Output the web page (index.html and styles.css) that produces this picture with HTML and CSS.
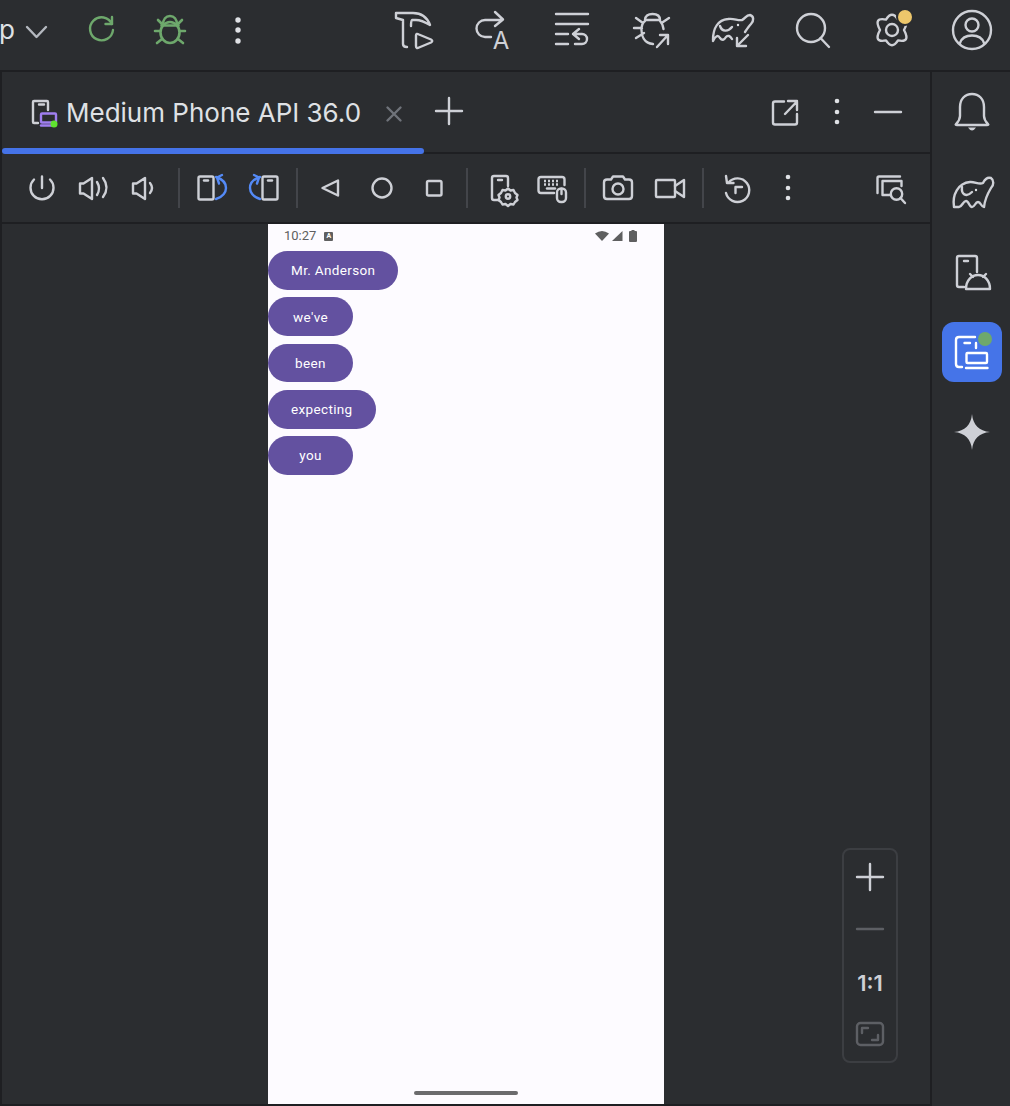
FILE: index.html
```html
<!DOCTYPE html>
<html lang="en">
<head>
<meta charset="utf-8">
<title>Running Devices</title>
<link rel="stylesheet" href="styles.css">
</head>
<body>
<header class="topbar">
  <div class="top-left">
    <span class="crumb">p</span>
    <svg class="ico chev" viewBox="0 0 48 48"><path d="M15 21l9.500 10L34 21"/></svg>
    <svg class="ico green" viewBox="0 0 48 48"><path d="M34 18A11.500 11.500 0 1 0 35 24"/><path d="M34 11v7h-6.500"/></svg>
    <svg class="ico green thick" viewBox="0 0 48 48"><path d="M17 19c0-6 3-9 7-9s7 3 7 9"/><ellipse cx="24" cy="26.500" rx="9.500" ry="10.500"/><path d="M9 25h5M34 25h5M12 14l5 5M36 14l-5 5M11 37l5-4M37 37l-5-4M15.500 19.500h17"/></svg>
    <svg class="ico" viewBox="0 0 48 48"><circle class="dot" cx="24" cy="14" r="2.700"/><circle class="dot" cx="24" cy="24" r="2.700"/><circle class="dot" cx="24" cy="35" r="2.700"/></svg>
  </div>
  <div class="top-right">
    <svg class="ico" viewBox="0 0 48 48"><path d="M8 7h17c8 0 14 4 17 12-5-3-9-5-14-5h-4c-1 1-1 3-1 6M8 7v5l7 2M15 14v24q0 3 4 3"/><path d="M28 29.500q0-2.500 3-1l12 5q2.500 1.500 0 3l-12 5q-3 1.500-3-1.500z"/></svg>
    <svg class="ico" viewBox="0 0 48 48"><path d="M34 14H17a8.500 8.500 0 0 0 0 17h6M27 6l8 7.500L27 20"/><text class="glyph" x="33" y="42.500">A</text></svg>
    <svg class="ico" viewBox="0 0 48 48"><path d="M8 8h32M8 18h32M8 28h12M8 38h12M25 28h9a5 5 0 0 1 0 10h-7M25 28l6-5M25 28l6 5"/></svg>
    <svg class="ico" viewBox="0 0 48 48"><path d="M17 14c0-4 3-6 7.500-6s7.500 2 7.500 6M17 14h15M17 15c-3 2-3.500 6-3.500 9 0 5 2 13 11.500 14M32 15c2 2 3 5 3.500 8M8 12l7 5M6 22h8M8 32l8-5M41 12l-6 4M29 41l11-12M32 29h8v9"/></svg>
    <svg class="ico" viewBox="0 0 48 48"><path d="M5 34C5 22 10 14 20 13c6-1 10 2 14 1 3-1 4-5 8-5 4 1 4 6 1 9-2 2-4 5-6 8M5 35q4-8 7-3 3 4 6-1 3-3 6 2M12 20c2 6 8 6 12 1"/><circle class="dot" cx="30" cy="19" r="1.200"/><path d="M40 29L30 39M29 32v8h9"/></svg>
    <svg class="ico" viewBox="0 0 48 48"><circle cx="23" cy="22" r="14"/><path d="M32.500 32L41 41"/></svg>
    <svg class="ico" viewBox="0 0 48 48"><path d="M18 13.600q6-9.600 12 0 13-2.600 6 10.400 7 13-6 10.400-6 9.600-12 0-13 2.600-6-10.400-7-13 6-10.400z"/><circle cx="24" cy="24" r="6"/><circle class="cut" cx="37" cy="11" r="9"/><circle class="amber" cx="37" cy="11" r="7"/></svg>
    <svg class="ico" viewBox="0 0 48 48"><circle cx="24" cy="24" r="19"/><circle cx="24" cy="19" r="6.500"/><path d="M12 37c2-6 7-7.500 12-7.500s10 1.500 12 7.500"/></svg>
  </div>
</header>

<div class="workspace">
  <main class="panel">
    <div class="tabrow">
      <svg class="ico" viewBox="0 0 48 48"><path d="M28 22v-8q0-1-1-1H14q-1 0-1 1v20q0 1 1 1h4M19 16.500h5"/><rect class="violet" x="21" y="25.500" width="15" height="9" rx="1"/><path class="violet" d="M21 37.500h13"/><circle class="live" cx="34" cy="36" r="3.500"/></svg>
      <span class="tab-title">Medium Phone API 36.0</span>
      <svg class="ico muted close" viewBox="0 0 48 48"><path d="M17.500 19.500l13 13M30.500 19.500l-13 13"/></svg>
      <svg class="ico plus" viewBox="0 0 48 48"><path d="M24 10v26M11 23h26"/></svg>
      <div class="tab-actions">
        <svg class="ico" viewBox="0 0 48 48"><path d="M22 13.500h-9q-2 0-2 2v19q0 2 2 2h20q2 0 2-2V26M23 26l12-12.500M26 13h9v9"/></svg>
        <svg class="ico" viewBox="0 0 48 48"><circle class="dot" cx="24" cy="13" r="2.300"/><circle class="dot" cx="24" cy="24" r="2.300"/><circle class="dot" cx="24" cy="34" r="2.300"/></svg>
        <svg class="ico" viewBox="0 0 48 48"><path d="M11 24h26"/></svg>
      </div>
    </div>
    <div class="tabline"><span class="tabline-active"></span><span class="tabline-rest"></span></div>

    <div class="emubar">
      <div class="group gap-3">
        <svg class="ico" viewBox="0 0 48 48"><path d="M16 15.500a11.500 11.500 0 1 0 16 0M24 12.500V24"/></svg>
        <svg class="ico" viewBox="0 0 48 48"><path d="M11 19.500h3.500L23 14v21l-8.500-5.500H11zM28 18q4 6.500 0 13M34 14q7 9.500 0 19"/></svg>
        <svg class="ico" viewBox="0 0 48 48"><path d="M13 19.500h3.500L25 14v21l-8.500-5.500H13zM30 19q4 5 0 10"/></svg>
      </div>
      <span class="sep sep-wide-left"></span>
      <div class="group">
        <svg class="ico" viewBox="0 0 48 48"><rect x="10.500" y="12.500" width="15" height="23" rx="1.500"/><path d="M16 16.500h4"/><path class="blue" d="M28 35c7-2 10-7 10-11 0-5-4-9-10-11M34 11l-5 2.500 2 6"/></svg>
        <svg class="ico" viewBox="0 0 48 48"><rect x="22.500" y="12.500" width="15" height="23" rx="1.500"/><path d="M28 16.500h4"/><path class="blue" d="M20 35c-7-2-10-7-10-11 0-5 4-9 10-11M14 11l5 2.500-2 6"/></svg>
      </div>
      <span class="sep"></span>
      <div class="group">
        <svg class="ico" viewBox="0 0 48 48"><path d="M16.500 24L32 16.500v15z"/></svg>
        <svg class="ico" viewBox="0 0 48 48"><circle cx="24" cy="24" r="9.500"/></svg>
        <svg class="ico" viewBox="0 0 48 48"><rect x="17" y="17" width="14.500" height="14.500" rx="1.500"/></svg>
      </div>
      <span class="sep sep-wide-right"></span>
      <div class="group gap-2">
        <svg class="ico" viewBox="0 0 48 48"><path d="M30 22v-8q0-2-2-2H16q-2 0-2 2v20q0 2 2 2h5M20 16h4"/><path d="M30 24.500l2.500 2 3-.5 1.500 3 2.500 2-1 2.500 1 2.500-2.500 2-1.500 2.500-3-.5-2.500 2-2.500-2-3 .5-1.500-2.500-2.500-2 1-2.500-1-2.500 2.500-2 1.500-3 3 .5z"/><circle cx="30" cy="32.500" r="2.200"/></svg>
        <svg class="ico" viewBox="0 0 48 48"><path d="M26 29H13q-2.500 0-2.500-2.500v-11q0-2.500 2.500-2.500h21q2.500 0 2.500 2.500V21"/><path class="dash" d="M16 17h15M16 20.500h15"/><path d="M19 24.500h8"/><rect x="29" y="24.500" width="9" height="13.500" rx="4"/><path d="M33.500 25v5"/></svg>
      </div>
      <span class="sep"></span>
      <div class="group">
        <svg class="ico" viewBox="0 0 48 48"><path d="M10 18.500q0-3 3-3h4l2-3h10l2 3h4q3 0 3 3v13.500q0 3-3 3H13q-3 0-3-3z"/><circle cx="24" cy="25" r="5.500"/></svg>
        <svg class="ico" viewBox="0 0 48 48"><rect x="10" y="16" width="19" height="17" rx="1"/><path d="M29 22l9-6v17l-9-6"/></svg>
      </div>
      <span class="sep"></span>
      <div class="group">
        <svg class="ico" viewBox="0 0 48 48"><path d="M16.500 18.500A11.800 11.800 0 1 1 14 29M14 12l1 7h6.500M23.500 29v-6H30"/></svg>
        <svg class="ico" viewBox="0 0 48 48"><circle class="dot" cx="24" cy="13" r="2.300"/><circle class="dot" cx="24" cy="24" r="2.300"/><circle class="dot" cx="24" cy="34" r="2.300"/></svg>
      </div>
      <svg class="ico shots" viewBox="0 0 48 48"><path d="M34 12.500H13q-1.500 0-1.500 1.500v15M35.500 22v-5h-19v14h8"/><circle cx="30.500" cy="30" r="5.700"/><path d="M34.500 34l4.500 5"/></svg>
    </div>

    <section class="stage">
      <div class="phone">
        <div class="statusbar">
          <span class="clock">10:27</span>
          <span class="badge">A</span>
          <span class="status-right">
            <svg class="st" width="14" height="12" viewBox="0 0 14 12"><path d="M0 3.500Q7-1.500 14 3.500L7 11z"/></svg>
            <svg class="st" width="12" height="12" viewBox="0 0 12 12"><path d="M11.500 1v10H1z"/></svg>
            <svg class="st batt" width="8" height="12" viewBox="0 0 8 12"><path d="M2.500 0h3v1H7q1 0 1 1v9q0 1-1 1H1q-1 0-1-1V2q0-1 1-1h1.500z"/></svg>
          </span>
        </div>
        <button class="chip">Mr. Anderson</button>
        <button class="chip">we've</button>
        <button class="chip">been</button>
        <button class="chip">expecting</button>
        <button class="chip">you</button>
        <span class="homebar"></span>
      </div>
      <div class="zoomer">
        <svg class="ico" viewBox="0 0 48 48"><path d="M24 11v26M11 24h26"/></svg>
        <svg class="ico faint" viewBox="0 0 48 48"><path d="M11 24h26"/></svg>
        <span class="ratio">1:1</span>
        <svg class="ico faint" viewBox="0 0 48 48"><rect x="11" y="14" width="26" height="22" rx="3.500"/><path d="M16 24v-5h6M32 26v5h-6"/></svg>
      </div>
    </section>
  </main>

  <aside class="rail">
    <span class="rail-slot"><svg class="ico" viewBox="0 0 48 48"><path d="M8 36q4-4 4-8v-9c0-8 5-13 12-13s12 5 12 13v9q0 4 4 8 1 1-1 1H9q-2 0-1-1z"/><path class="solid" d="M20 39.500h8q-2 3-4 3t-4-3z"/></svg></span>
    <span class="rail-slot"><svg class="ico" viewBox="0 0 48 48"><path d="M6 39C4 27 10 15 22 14c5-.5 9 3 13 1 2-4 5-6 8-5 3 2 3 7 0 10-3 5-6 10-7 19-3 0-3-5-6-5s-3 5-6 5-3-6-6-6-4 6-7 6-5 0-5 0z"/><path d="M14 19c-1 7 4 11 10 5"/><circle class="dot" cx="28" cy="22" r="1.200"/></svg></span>
    <span class="rail-slot"><svg class="ico" viewBox="0 0 48 48"><path d="M29 24V10q0-2-2-2H11q-2 0-2 2v27q0 2 2 2h5M16 13h4"/><path d="M18 41c0-9 6-14 12-14s12 5 12 14zM22 26l3 3M38 26l-3 3"/></svg></span>
    <span class="rail-slot rail-active"><svg class="ico white" viewBox="0 0 48 48"><path d="M27 9H11q-3 0-3 3v24q0 3 3 3h3M16.500 15H22M28 15v5"/><rect x="18.500" y="25" width="20.500" height="10" rx="1"/><path d="M18 40h21.500"/><circle class="online" cx="37" cy="11" r="7"/></svg></span>
    <span class="rail-slot"><svg class="ico" viewBox="0 0 48 48"><path class="solid" d="M24 6c1 11 7 17 18 18-11 1-17 7-18 18-1-11-7-17-18-18 11-1 17-7 18-18z"/></svg></span>
  </aside>
</div>
</body>
</html>
```

FILE: styles.css
```css
* { box-sizing: border-box; }

html, body {
  margin: 0;
  height: 1106px;
  overflow: hidden;
}

body {
  background: #2b2d30;
  color: #dfe1e5;
  font-family: Inter, "Liberation Sans", sans-serif;
  display: flex;
  flex-direction: column;
}

.ico {
  width: 48px;
  height: 48px;
  flex: none;
  fill: none;
  stroke: #ced0d6;
  stroke-width: 2.400;
  stroke-linecap: round;
  stroke-linejoin: round;
  display: block;
}
.ico .dot { fill: #dfe1e5; stroke: none; }
.ico .solid { fill: #ced0d6; stroke: none; }
.ico .glyph {
  fill: #ced0d6;
  stroke: none;
  font-family: Inter, sans-serif;
  font-size: 24px;
  text-anchor: middle;
}

.topbar {
  height: 72px;
  flex: none;
  display: flex;
  align-items: center;
  padding-bottom: 10px;
  border-bottom: 2px solid #1e1f22;
}
.top-left { display: flex; align-items: center; gap: 20px; }
.top-right {
  display: flex;
  align-items: center;
  gap: 32px;
  margin-left: auto;
  padding-right: 14px;
}
.crumb {
  width: 12px;
  margin-right: -20px;
  margin-left: -1px;
  font-size: 26px;
  line-height: 48px;
}
.chev { stroke: #b4b8bf; margin-left: 1px; margin-right: -2px; }
.green { stroke: #6ea86c; }
.thick { stroke-width: 2.600; }
.cut { fill: #2b2d30; stroke: none; }
.amber { fill: #edc76b; stroke: none; }

.workspace { flex: 1; display: flex; min-height: 0; }

.panel {
  width: 932px;
  flex: none;
  display: flex;
  flex-direction: column;
  border-left: 2px solid #1e1f22;
  border-right: 2px solid #1e1f22;
  border-bottom: 2px solid #1e1f22;
}

.tabrow {
  height: 76px;
  flex: none;
  display: flex;
  align-items: center;
  padding: 4px 18px 0 18px;
}
.tab-title {
  font-size: 26px;
  line-height: 32px;
  margin-left: -2px;
  padding-top: 2px;
  color: #dfe1e5;
  white-space: nowrap;
}
.violet { stroke: #a07ff0; }
.live { fill: #5fe32f; stroke: none; }
.muted { stroke: #6f737a; }
.close { margin-left: 9px; }
.plus { margin-left: 7px; }
.tab-actions { display: flex; gap: 3px; margin-left: auto; }

.tabline { height: 6px; flex: none; display: flex; }
.tabline-active {
  width: 422px;
  height: 6px;
  border-radius: 3px;
  background: #4573e8;
}
.tabline-rest { flex: 1; border-bottom: 2px solid #1e1f22; }

.emubar {
  height: 70px;
  flex: none;
  display: flex;
  align-items: center;
  padding: 0 16px;
  border-bottom: 2px solid #1e1f22;
}
.group { display: flex; gap: 4px; }
.gap-2 { gap: 2px; }
.gap-3 { gap: 3px; }
.sep { width: 2px; height: 40px; margin: 0 8px; background: #43454a; flex: none; }
.sep-wide-left { margin-left: 10px; }
.sep-wide-right { margin-right: 10px; }
.blue { stroke: #548af7; }
.dash { stroke-dasharray: 2 2; stroke-linecap: butt; }
.shots { margin-left: auto; }

.stage {
  position: relative;
  flex: 1;
  display: flex;
  justify-content: center;
  min-height: 0;
}

.phone {
  width: 396px;
  background: #fdfbff;
  display: flex;
  flex-direction: column;
  align-items: flex-start;
}
.statusbar {
  width: 100%;
  height: 27px;
  flex: none;
  display: flex;
  align-items: center;
  padding: 0 27px 3px 16px;
  font-family: Roboto, sans-serif;
  color: #5f5f60;
}
.clock { font-size: 13px; line-height: 16px; }
.badge {
  width: 9px;
  height: 9px;
  margin-left: 8px;
  background: #5f5f60;
  color: #fff;
  border-radius: 1px;
  font-size: 7px;
  font-weight: 700;
  line-height: 9px;
  text-align: center;
}
.status-right { display: flex; align-items: center; gap: 2px; margin-left: auto; }
.st { fill: #5f5f60; display: block; }
.batt { margin-left: 4px; }

.chip {
  height: 38.750px;
  min-width: 85px;
  flex: none;
  margin: 0 0 7.500px;
  padding: 0 23px;
  border: 0;
  border-radius: 19.400px;
  background: #6351a0;
  color: #fff;
  font-family: Roboto, sans-serif;
  font-size: 13.500px;
  font-weight: 400;
  letter-spacing: 0.350px;
}

.homebar {
  width: 104px;
  height: 4px;
  margin: auto 0 9px 146px;
  border-radius: 2px;
  background: #6b6b6d;
  flex: none;
}

.zoomer {
  position: absolute;
  right: 32px;
  bottom: 41px;
  width: 56px;
  height: 215px;
  border: 2px solid #3c3e42;
  border-radius: 8px;
  display: flex;
  flex-direction: column;
  align-items: center;
  gap: 4px;
  padding-top: 3px;
}
.faint { stroke: #5d5f64; }
.ratio {
  height: 48px;
  font-size: 22px;
  font-weight: 600;
  line-height: 52px;
  color: #ced0d6;
}

.rail {
  flex: 1;
  display: flex;
  flex-direction: column;
  align-items: center;
  gap: 20px;
  padding: 10px 0 0 2px;
}
.rail-slot {
  width: 60px;
  height: 60px;
  display: flex;
  align-items: center;
  justify-content: center;
  border-radius: 12px;
}
.rail-active { background: #4574e8; }
.white { stroke: #fff; }
.online { fill: #6ea86c; stroke: none; }
```
